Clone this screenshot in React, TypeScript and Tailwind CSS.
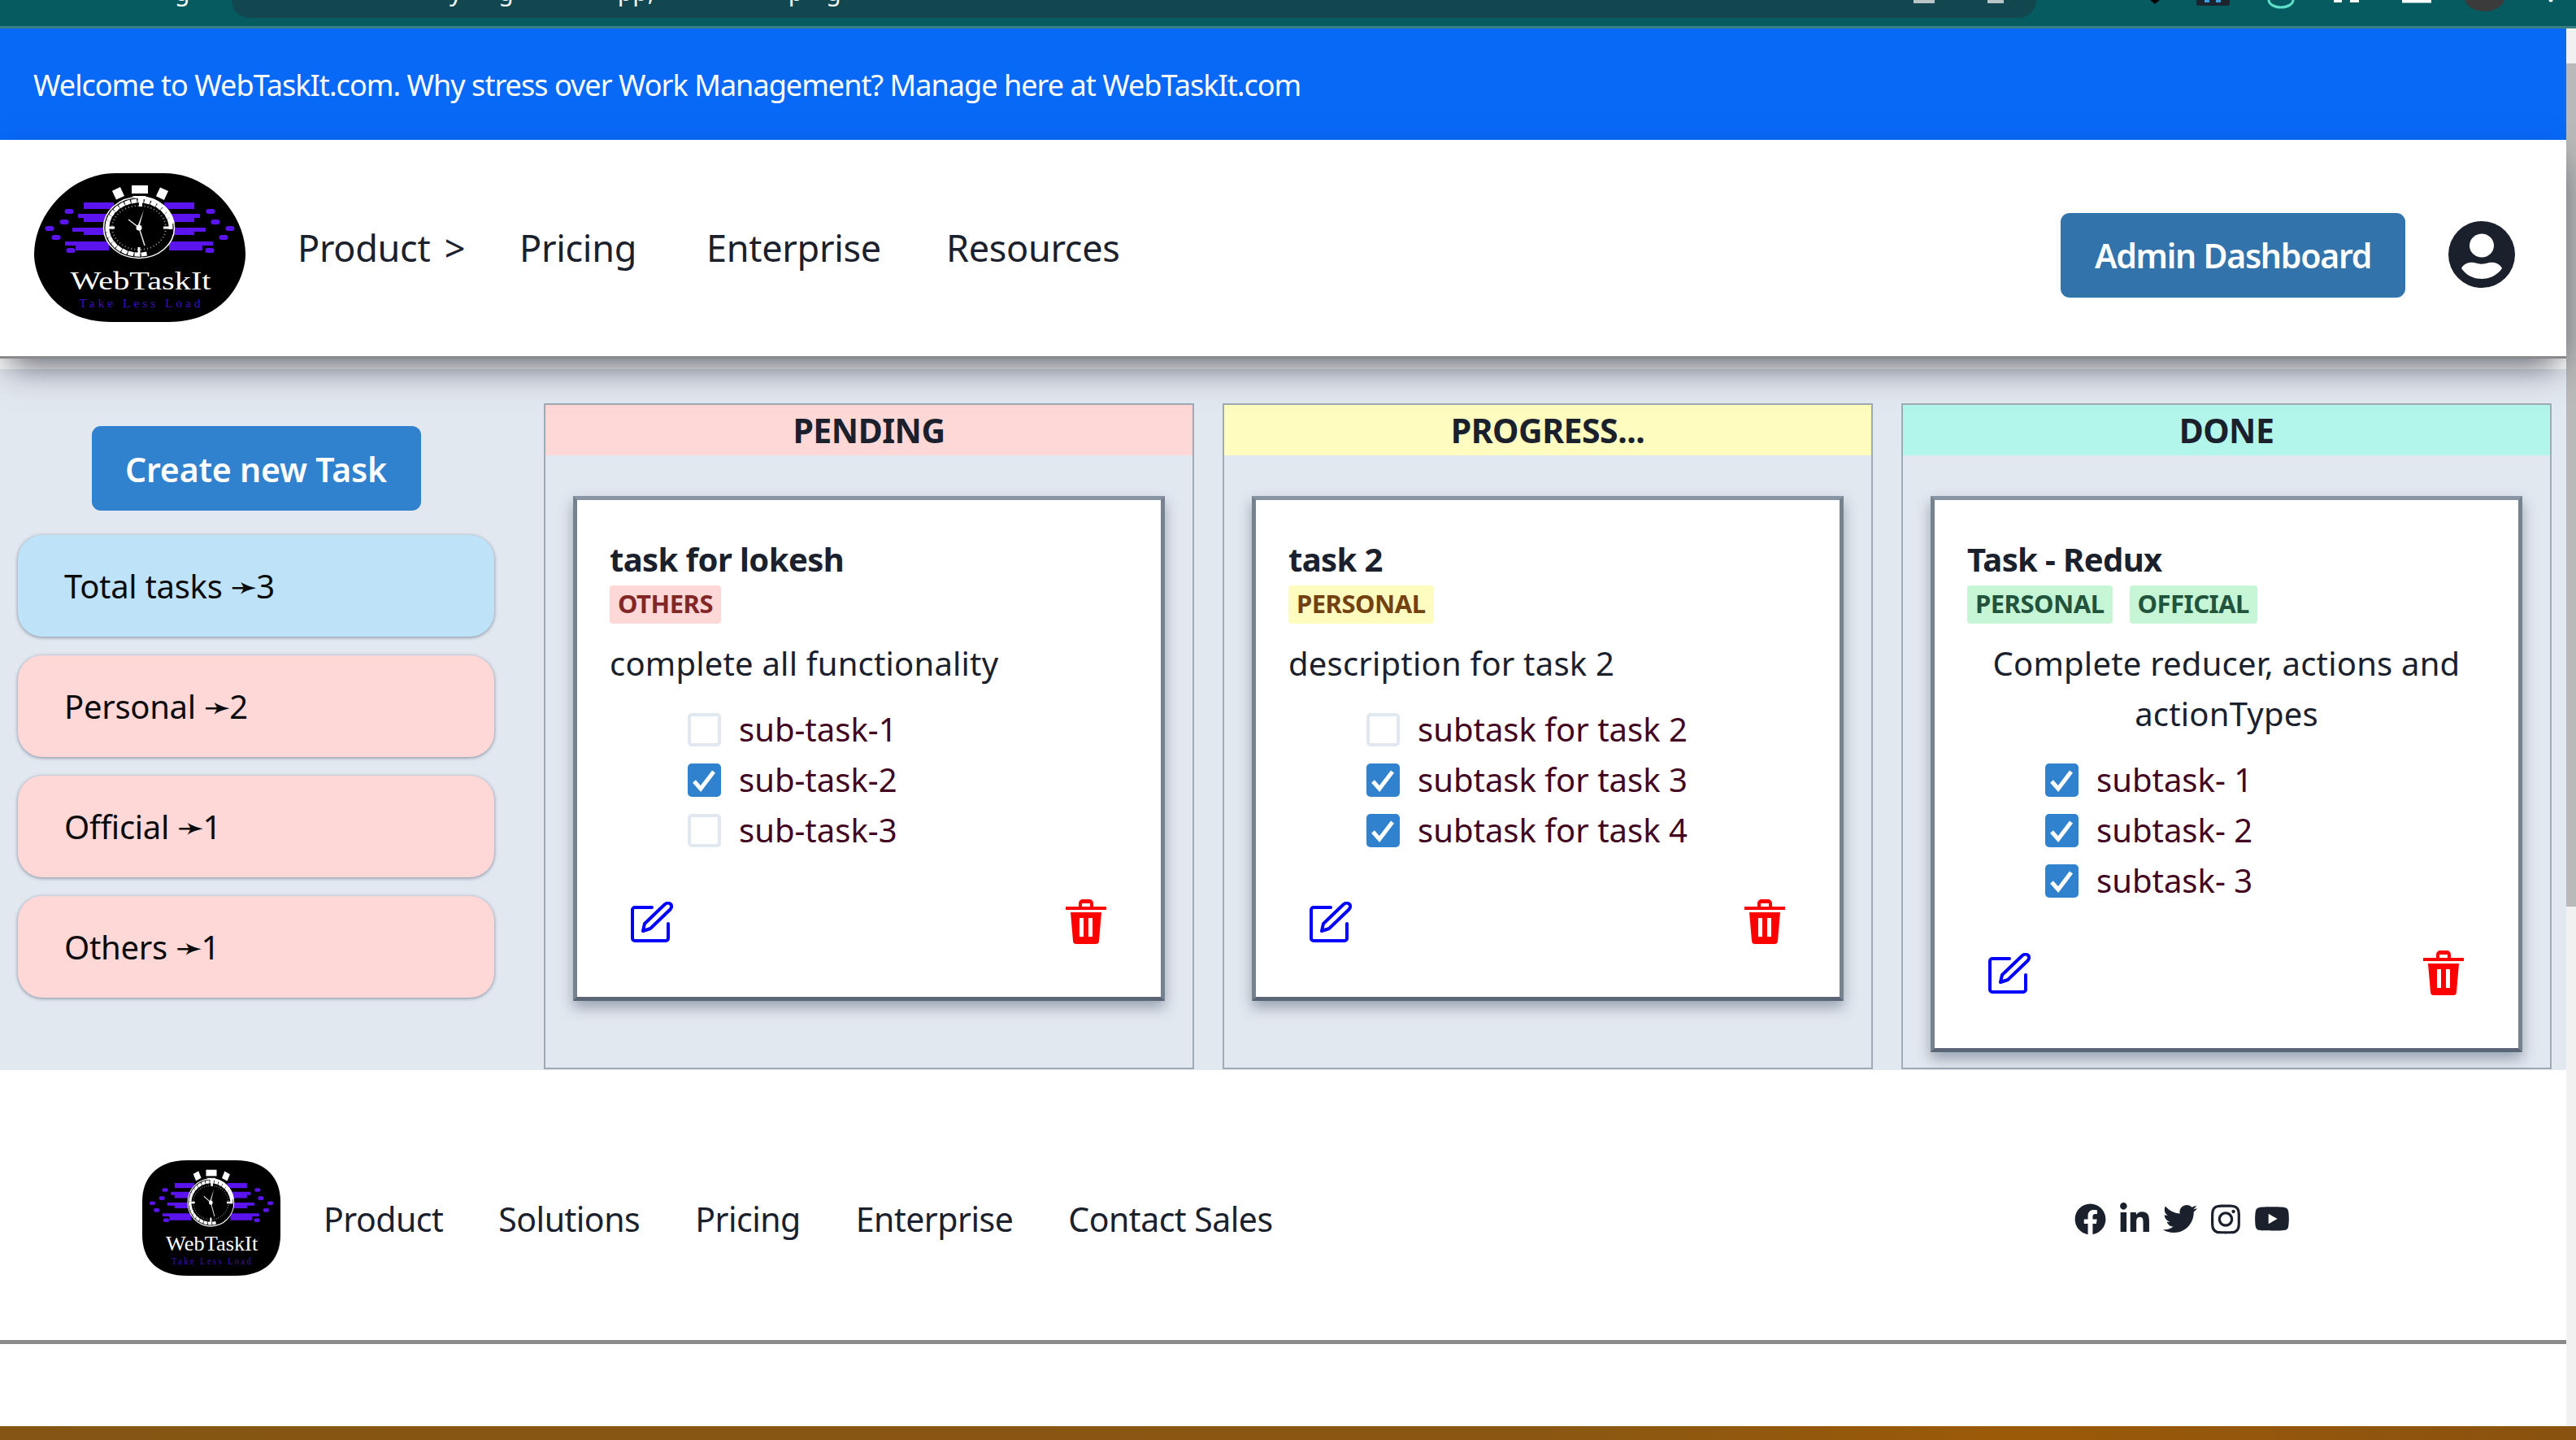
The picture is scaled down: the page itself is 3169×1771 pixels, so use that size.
import { FaFacebook, FaLinkedinIn, FaTwitter, FaInstagram, FaYoutube } from "react-icons/fa";

const font = "[font-family:'Noto_Sans','DejaVu_Sans',sans-serif]";

function Logo({ className, squarish }: { className: string; squarish?: boolean }) {
  const shape = squarish
    ? "M85 0H175C235 0 260 30 260 65V118C260 155 235 183 175 183H85C25 183 0 155 0 118V65C0 30 25 0 85 0Z"
    : "M100 0H160C215 0 260 50 260 100C260 125 240 183 165 183H95C20 183 0 125 0 100C0 50 45 0 100 0Z";
  const purple = "#5b14ee";
  const bars = [
    "M61 36H98V44H61Z", "M160 36H197V44H160Z",
    "M54 50H92V60H61V55H54Z", "M166 50H204V55H197V60H166Z",
    "M47 67H90V76H61V72H47Z", "M168 67H211V72H197V76H168Z",
    "M38 84H92V95H51V89H38Z", "M166 84H220V89H207V95H166Z",
  ];
  const pills = [[43, 47], [37, 60], [19, 68], [27, 79], [45, 95], [217, 47], [223, 60], [241, 68], [233, 79], [216, 95]];
  const segs = Array.from({ length: 24 });
  const cx = 129;
  const cy = 67;
  return (
    <svg viewBox="0 0 260 183" preserveAspectRatio="none" className={className}>
      <path d={shape} fill="#000" />
      {bars.map((d, i) => <path key={i} d={d} fill={purple} />)}
      {pills.map(([x, y], i) => <rect key={i} x={x - 5.5} y={y - 3} width="11" height="6" rx="3" fill={purple} />)}
      <rect x="120" y="15" width="20" height="10" fill="#fff" />
      <rect x="98" y="19" width="11" height="12" fill="#fff" transform="rotate(-25 103 25)" />
      <rect x="152" y="19" width="11" height="12" fill="#fff" transform="rotate(25 157 25)" />
      <ellipse cx={cx} cy={cy} rx="44" ry="38" fill="#000" />
      <ellipse cx={cx} cy={cy} rx="43.5" ry="37.5" fill="none" stroke="#fff" strokeWidth="1.5" />
      {segs.map((_, i) => {
        const a = (i / 24) * Math.PI * 1.6 + Math.PI * 0.45;
        const x = cx + 39 * Math.cos(a);
        const y = cy + 33 * Math.sin(a);
        return <rect key={i} x={x - 3.5} y={y - 2.5} width="7" height="5" fill="#fff" transform={`rotate(${(a * 180) / Math.PI + 90} ${x} ${y})`} />;
      })}
      <path d="M131 30A41 35 0 0 1 170 62" fill="none" stroke="#fff" strokeWidth="3.5" />
      <ellipse cx={cx} cy={cy} rx="33" ry="27" fill="none" stroke="#9a9a9a" strokeWidth="2" strokeDasharray="1 3" />
      <path d="M135 45L129 67L127 66Z" fill="#fff" />
      <path d="M116 57L129 67L136 89" fill="none" stroke="#e8e8e8" strokeWidth="1.5" />
      <circle cx={cx} cy={cy} r="3.5" fill="#fff" />
      <path d="M120 28H138L133 32V41H129V32Z" fill="#fff" />
      <path d="M129 91V98M92 67H99M159 67H166" stroke="#fff" strokeWidth="3" />
      <text x="131" y="143" textAnchor="middle" fill="#fff" fontFamily="'Liberation Serif',serif" fontSize="32" textLength="173" lengthAdjust="spacingAndGlyphs">WebTaskIt</text>
      <text x="130" y="165" textAnchor="middle" fill="#3f10c0" fontFamily="'Liberation Serif',serif" fontSize="15" textLength="149" lengthAdjust="spacing">Take Less Load</text>
    </svg>
  );
}

function UserIcon() {
  return (
    <svg viewBox="0 0 82 82" className="w-[82px] h-[82px] mt-[-2px]">
      <circle cx="41" cy="41" r="41" fill="#1a202c" />
      <ellipse cx="41" cy="30" rx="15" ry="14.5" fill="#fff" />
      <path d="M16 58C20 50 30 50 34 51.5C38 53 44 53 48 51.5C52 50 62 50 66 58C60 67 50 71 41 71C32 71 22 67 16 58Z" fill="#fff" />
    </svg>
  );
}

function EditIcon() {
  return (
    <svg viewBox="0 0 52 50" className="w-[52px] h-[50px]" fill="none" stroke="#0000ff" strokeWidth="4" strokeLinejoin="round" strokeLinecap="round">
      <path d="M26 7H5A3 3 0 0 0 2 10V45A3 3 0 0 0 5 48H43A3 3 0 0 0 46 45V27" />
      <path d="M15 36L17 27L41 4C44 1 47 1 49 3C51 5 50 8 48 10L24 33Z" />
    </svg>
  );
}

function TrashIcon() {
  return (
    <svg viewBox="0 0 50 55" className="w-[50px] h-[55px]">
      <path d="M0 9H16V5A5 5 0 0 1 21 0H29A5 5 0 0 1 34 5V9H50V13H0ZM20 9H30V5H20Z" fill="#ff0000" fillRule="evenodd" />
      <path d="M6 16H44L41 51A4 4 0 0 1 37 55H13A4 4 0 0 1 9 51ZM17 23V46H22V23ZM28 23V46H33V23Z" fill="#ff0000" fillRule="evenodd" />
    </svg>
  );
}

function Check({ on }: { on: boolean }) {
  return on ? (
    <span className="w-[41px] h-[41px] rounded-[5px] bg-[#3182ce] flex items-center justify-center shrink-0">
      <svg viewBox="0 0 41 41" className="w-[41px] h-[41px]" fill="none" stroke="#fff" strokeWidth="5"><path d="M8 22L16 31L32 10" /></svg>
    </span>
  ) : (
    <span className="w-[41px] h-[41px] rounded-[5px] border-[4px] border-[#e2e8f0] bg-white shrink-0" />
  );
}

type Task = {
  title: string;
  tags: { t: string; c: string }[];
  desc: string;
  center?: boolean;
  subs: [string, boolean][];
};

function Card({ task, h }: { task: Task; h: string }) {
  return (
    <div className={`${h} border-[5px] border-t-[#8794a3] border-x-[#76838f] border-b-[#5a6675] bg-white shadow-[0_8px_16px_rgba(60,75,100,0.45)] px-[40px] pt-[48px] flex flex-col`}>
      <div className="text-[40px] leading-[50px] font-bold text-[#1a202c] tracking-[-0.6px]">{task.title}</div>
      <div className="flex gap-[21px] mt-[7px]">
        {task.tags.map((t) => (
          <span key={t.t} className={`${t.c} h-[47px] leading-[45px] px-[10px] rounded-[4px] text-[31px] font-bold tracking-[-0.5px]`}>{t.t}</span>
        ))}
      </div>
      <div className={`mt-[18px] text-[40px] leading-[62px] text-[#1a202c] tracking-[0.2px] ${task.center ? "text-center" : ""}`}>{task.desc}</div>
      <div className="mt-[19px] pl-[96px] flex flex-col">
        {task.subs.map(([s, on]) => (
          <div key={s} className="h-[62px] flex items-center gap-[22px] text-[40px] text-[#420420]">
            <Check on={on} />
            <span>{s}</span>
          </div>
        ))}
      </div>
      <div className="flex justify-between items-center mt-[auto] mb-[65px] pl-[26px] pr-[27px]">
        <EditIcon />
        <TrashIcon />
      </div>
    </div>
  );
}

function Column({ title, head, task, h }: { title: string; head: string; task: Task; h: string }) {
  return (
    <div className="w-[800px] h-[819px] border-[2px] border-[#a0aab4] flex flex-col">
      <div className={`${head} h-[62px] flex items-center justify-center text-[41px] font-bold text-[#1a202c] tracking-[-0.5px] pt-[2px]`}>{title}</div>
      <div className="px-[34px] pt-[50px]">
        <Card task={task} h={h} />
      </div>
    </div>
  );
}

function StatCard({ label, n, bg }: { label: string; n: number; bg: string }) {
  return (
    <div className={`${bg} h-[125px] rounded-[30px] shadow-[0_1px_4px_rgba(60,75,100,0.6)] flex items-center pl-[57px] text-[40px] text-[#0a0a0a] tracking-[-0.3px]`}>
      <span>{label}&nbsp;</span>
      <span className="tracking-[-2px]">➛</span>
      <span>{n}</span>
    </div>
  );
}

const pending: Task = {
  title: "task for lokesh",
  tags: [{ t: "OTHERS", c: "bg-[#fed7d7] text-[#822727]" }],
  desc: "complete all functionality",
  subs: [["sub-task-1", false], ["sub-task-2", true], ["sub-task-3", false]],
};
const progress: Task = {
  title: "task 2",
  tags: [{ t: "PERSONAL", c: "bg-[#fefcbf] text-[#744210]" }],
  desc: "description for task 2",
  subs: [["subtask for task 2", false], ["subtask for task 3", true], ["subtask for task 4", true]],
};
const done: Task = {
  title: "Task - Redux",
  tags: [
    { t: "PERSONAL", c: "bg-[#c6f6d5] text-[#22543d]" },
    { t: "OFFICIAL", c: "bg-[#c6f6d5] text-[#22543d]" },
  ],
  desc: "Complete reducer, actions and actionTypes",
  center: true,
  subs: [["subtask- 1", true], ["subtask- 2", true], ["subtask- 3", true]],
};

function ToolbarIcons() {
  return (
    <svg viewBox="0 0 650 32" className="w-[650px] h-[32px] shrink-0">
      <path d="M140 0H152L146 5Z" fill="#000" />
      <path d="M197 0H238V4A3 3 0 0 1 235 7H200A3 3 0 0 1 197 4Z" fill="#1c2430" />
      <path d="M207 0H213V3H207ZM221 0H227V3H221Z" fill="#3aa0e8" />
      <path d="M286 0A15 9 0 0 0 316 0" fill="none" stroke="#5fe0c8" strokeWidth="3" />
      <path d="M366 0H376V3H366ZM386 0H397V3H386Z" fill="#fff" />
      <rect x="450" y="0" width="36" height="3.5" fill="#fff" />
      <path d="M527 0H576C574 8 562 14 552 14C540 14 529 8 527 0Z" fill="#3b3b3b" />
      <circle cx="633" cy="0" r="2.5" fill="#fff" />
    </svg>
  );
}

export default function App() {
  return (
    <div className={`w-[3169px] h-[1771px] overflow-hidden flex flex-col bg-white ${font}`}>
      <div className="h-[35px] shrink-0 bg-[#055b60] border-b-[3px] border-[#3a7f84] flex overflow-hidden">
        <div className="w-[285px] shrink-0 h-[12px] overflow-hidden text-[30px] leading-[30px] text-white">
          <div className="mt-[-25px] pl-[215px]">g</div>
        </div>
        <div className="w-[2220px] shrink-0 h-[22px] bg-[#12474f] rounded-b-[28px] overflow-hidden text-[30px] leading-[30px] text-[#f4f7f7] flex">
          <div className="mt-[-25px] pl-[268px] flex">
            <span>y</span>
            <span className="ml-[45px]">g</span>
            <span className="ml-[128px]">pp,</span>
            <span className="ml-[165px]">p</span>
            <span className="ml-[28px]">g</span>
          </div>
          <div className="ml-auto mr-[40px] flex gap-[65px] items-start">
            <span className="w-[26px] h-[4px] bg-[#b9c6c8]" />
            <span className="w-[20px] h-[4px] bg-[#b9c6c8]" />
          </div>
        </div>
        <ToolbarIcons />
      </div>
      <div className="flex-1 flex min-h-0">
        <div className="w-[3157px] flex flex-col">
          <div className="h-[137px] shrink-0 bg-[#0869f7] flex items-center pl-[41px] pt-[2px] text-[36px] text-white tracking-[-0.96px]">
            Welcome to WebTaskIt.com. Why stress over Work Management? Manage here at WebTaskIt.com
          </div>
          <header className="h-[269px] shrink-0 bg-white border-b-[3px] border-[#8a8a8a] flex items-center pl-[42px] pr-[63px] relative z-10 shadow-[0_18px_40px_-10px_rgba(20,25,40,0.72)]">
            <Logo className="w-[260px] h-[183px] shrink-0 mt-[-2px]" />
            <nav className="ml-[64px] flex items-center text-[45px] text-[#1a202c] tracking-[-0.3px] mt-[-1px]">
              <span className="w-[273px] [word-spacing:6px]">Product &gt;</span>
              <span className="w-[230px]">Pricing</span>
              <span className="w-[295px]">Enterprise</span>
              <span>Resources</span>
            </nav>
            <div className="ml-auto flex items-center gap-[53px] mt-[18px]">
              <button className="w-[424px] h-[104px] rounded-[11px] bg-[#3373ab] text-white text-[41px] font-semibold tracking-[-1.25px] pt-[2px]">Admin Dashboard</button>
              <UserIcon />
            </div>
          </header>
          <div className="h-[13px] shrink-0 bg-white" />
          <main className="h-[862px] shrink-0 bg-[#e2e8f0] flex">
            <aside className="w-[669px] shrink-0 pl-[22px] pr-[61px] pt-[70px] flex flex-col">
              <button className="self-center w-[405px] h-[104px] rounded-[11px] bg-[#3182ce] text-white text-[41px] font-semibold tracking-[-0.2px] pt-[4px]">Create new Task</button>
              <div className="mt-[30px] flex flex-col gap-[23px]">
                <StatCard label="Total tasks" n={3} bg="bg-[#bee3f8]" />
                <StatCard label="Personal" n={2} bg="bg-[#fed7d7]" />
                <StatCard label="Official" n={1} bg="bg-[#fed7d7]" />
                <StatCard label="Others" n={1} bg="bg-[#fed7d7]" />
              </div>
            </aside>
            <div className="pt-[42px] flex gap-[35px]">
              <Column title="PENDING" head="bg-[#fed7d7]" task={pending} h="h-[621px]" />
              <Column title="PROGRESS..." head="bg-[#fefcbf]" task={progress} h="h-[621px]" />
              <Column title="DONE" head="bg-[#b2f5ea]" task={done} h="h-[684px]" />
            </div>
          </main>
          <footer className="h-[337px] shrink-0 bg-white border-b-[5px] border-[#8a8a8a] flex items-start pl-[175px] pr-[340px] pt-[111px]">
            <Logo squarish className="w-[170px] h-[142px] shrink-0" />
            <nav className="ml-[53px] mt-[42px] flex items-center gap-[68px] text-[41px] text-[#1a202c] tracking-[-0.5px]">
              <span>Product</span><span>Solutions</span><span>Pricing</span><span>Enterprise</span><span>Contact Sales</span>
            </nav>
            <div className="ml-auto mt-[50px] flex items-center gap-[17px] text-[#1a202c]">
              <FaFacebook className="w-[39px] h-[41px]" />
              <FaLinkedinIn className="w-[36px] h-[41px]" />
              <FaTwitter className="w-[42px] h-[42px]" />
              <FaInstagram className="w-[36px] h-[41px]" />
              <FaYoutube className="w-[44px] h-[44px]" />
            </div>
          </footer>
          <div className="flex-1 bg-white" />
        </div>
        <div className="w-[12px] bg-[#f1f1f1] flex flex-col">
          <div className="h-[1037px] mt-[43px] bg-[#b9b9b9]" />
        </div>
      </div>
      <div className="h-[17px] shrink-0 bg-[linear-gradient(90deg,#855513,#8a5712_60%,#9b5a08_78%,#8a5210)]" />
    </div>
  );
}
